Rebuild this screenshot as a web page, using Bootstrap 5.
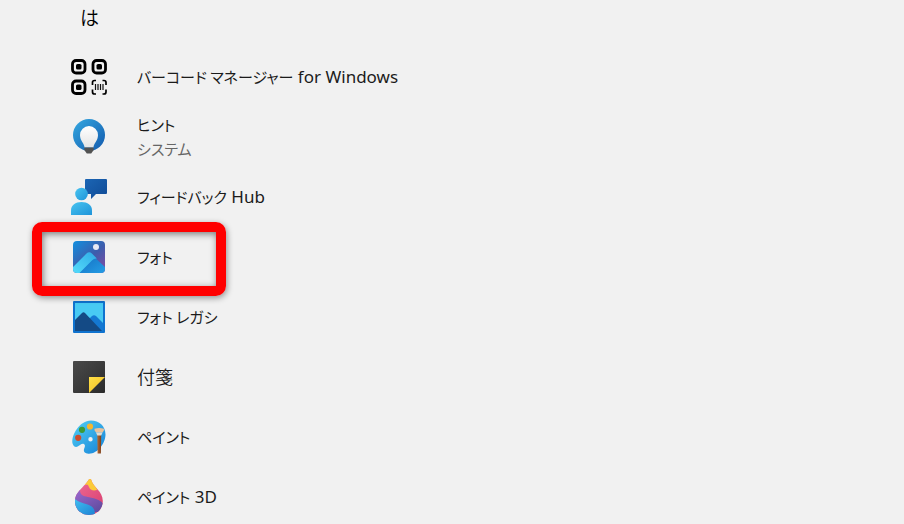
<!DOCTYPE html>
<html lang="ja">
<head>
<meta charset="utf-8">
<meta name="viewport" content="width=device-width, initial-scale=1">
<title>すべてのアプリ</title>
<link href="https://cdn.jsdelivr.net/npm/bootstrap@5.3.0/dist/css/bootstrap.min.css" rel="stylesheet">
<style>
body { background: #f1f1f1; color: #1b1b1b; font-family: "Noto Sans", "Noto Sans CJK JP", sans-serif; font-size: 17px; line-height: 24px; font-feature-settings: "palt"; }
.section-label { height: 47px; padding: 7px 0 0 80px; font-size: 19px; font-weight: 350; color: #000; }
.app-row { min-height: 60px; padding: 0 24px 0 71px; gap: 30px; color: inherit; }
.app-row:hover { color: inherit; }
.app-icon { width: 36px; height: 36px; flex: none; }
.kana { font-family: "Noto Sans CJK JP", sans-serif; font-size: 15px; font-weight: 400; }
.kanji { font-size: 18px; font-weight: 350; }
.app-sub { color: #666; }
.marker { left: 32px; top: -5px; width: 194px; height: 74px; border: 10px solid #f00; border-radius: 10px; box-shadow: 1px 2px 6px rgba(0,0,0,.4), inset 1px 2px 7px rgba(0,0,0,.5); pointer-events: none; }
</style>
</head>
<body>
<main class="vh-100 overflow-hidden">
<h1 class="section-label m-0 lh-sm">は</h1>
<ul class="list-unstyled m-0">
<li><a href="#" class="app-row d-flex align-items-center text-decoration-none">
<svg class="app-icon" viewBox="0 0 36 36" aria-hidden="true"><g fill="none" stroke="#000" stroke-width="2.8"><rect x="1.5" y="1.5" width="12.5" height="12.5" rx="3.6"/><rect x="22" y="1.5" width="12.5" height="12.5" rx="3.6"/><rect x="1.5" y="22" width="12.5" height="12.5" rx="3.6"/></g><g><rect x="5" y="5" width="5.5" height="5.5" rx="1.6"/><rect x="25.5" y="5" width="5.5" height="5.5" rx="1.6"/><rect x="5" y="25.5" width="5.5" height="5.5" rx="1.6"/></g><path d="M25 21.5h-1.5q-2 0-2 2V26M31.5 21.5H33q2 0 2 2V26M21.5 30.500V33q0 2 2 2H25M35 30.500V33q0 2-2 2h-1.500" fill="none" stroke="#000" stroke-width="1.7"/><path d="M24.500 25v6M27 25v6M29.500 25v6M32 25v6" stroke="#111" stroke-width="1.2"/></svg>
<span><span class="kana">バーコード マネージャー</span> for Windows</span></a></li>
<li><a href="#" class="app-row d-flex align-items-center text-decoration-none">
<svg class="app-icon" viewBox="0 0 36 36" aria-hidden="true"><defs><linearGradient id="tipBlue" x1="0" y1="0" x2="1" y2="1"><stop stop-color="#35a9e1"/><stop offset="1" stop-color="#1259ad"/></linearGradient><linearGradient id="bulb" x2="0" y2="1"><stop stop-color="#fff"/><stop offset="1" stop-color="#e4e4e4"/></linearGradient></defs><circle cx="18" cy="16" r="16" fill="url(#tipBlue)"/><path d="M13.500 28.500c0-4-4.500-6.500-4.500-12.500a9 9 0 0 1 18 0c0 6-4.500 8.500-4.500 12.500z" fill="url(#bulb)"/><path d="M13.300 28.500h9.400v2.500l-2.500 3.500h-4.400l-2.500-3.500z" fill="#525252"/></svg>
<span class="d-flex flex-column"><span class="kana">ヒント</span><span class="kana app-sub">システム</span></span></a></li>
<li><a href="#" class="app-row d-flex align-items-center text-decoration-none">
<svg class="app-icon" viewBox="0 0 36 36" aria-hidden="true"><defs><linearGradient id="person" x2="1" y2="1"><stop stop-color="#48c4f0"/><stop offset="1" stop-color="#1f94d9"/></linearGradient><linearGradient id="speech" x2="1" y2="1"><stop stop-color="#1b65b4"/><stop offset="1" stop-color="#104b96"/></linearGradient></defs><path d="M15 0h20q1 0 1 1v13q0 1-1 1H25l-5 5v-5h-5q-1 0-1-1V1q0-1 1-1z" fill="url(#speech)"/><circle cx="10.500" cy="15" r="6.300" fill="url(#person)"/><path d="M0 36v-4.500C0 26 4.500 23 10.500 23S21 26 21 31.500V36z" fill="url(#person)"/></svg>
<span><span class="kana">フィードバック</span> Hub</span></a></li>
<li class="position-relative"><a href="#" class="app-row d-flex align-items-center text-decoration-none">
<svg class="app-icon" viewBox="0 0 36 36" aria-hidden="true"><defs><linearGradient id="sky" x1=".1" y1="0" x2="1" y2="1"><stop stop-color="#168bdb"/><stop offset=".5" stop-color="#3d5dac"/><stop offset="1" stop-color="#884aa3"/></linearGradient><linearGradient id="ridge" x1="1" y1="0" x2="0" y2="1"><stop stop-color="#2eaae6"/><stop offset="1" stop-color="#55dcfb"/></linearGradient><linearGradient id="slope" x2="1" y2="1"><stop stop-color="#1269bd"/><stop offset="1" stop-color="#259de5"/></linearGradient><clipPath id="tile"><rect x="2" y="2" width="32" height="32" rx="4"/></clipPath></defs><g clip-path="url(#tile)"><path d="M2 2h32v32H2z" fill="url(#sky)"/><path d="M17 16q2-2 4 0l13 12v6H5z" fill="url(#slope)"/><path d="M2 28l13.500-13.500q2.700-2.400 5.400 0l5 5q-2.800-.3-5 2L8.500 34H2z" fill="url(#ridge)"/></g><circle cx="25" cy="8" r="3" fill="#e7e9f4"/></svg>
<span class="kana">フォト</span></a>
<div class="marker position-absolute" aria-hidden="true"></div></li>
<li><a href="#" class="app-row d-flex align-items-center text-decoration-none">
<svg class="app-icon" viewBox="0 0 36 36" aria-hidden="true"><rect x="2" y="2" width="32" height="32" rx="1" fill="#0f73cf"/><path d="M4 4h28v28H4z" fill="#48caf3"/><path d="M17 21l4-4q2-1.500 4 0l7 7v8H20z" fill="#1478d2"/><path d="M4 21l7-7q1.500-1.300 3 0l17 18H4z" fill="#144a85"/></svg>
<span class="kana">フォト レガシ</span></a></li>
<li><a href="#" class="app-row d-flex align-items-center text-decoration-none">
<svg class="app-icon" viewBox="0 0 36 36" aria-hidden="true"><defs><linearGradient id="note" x2="1" y2="1"><stop stop-color="#4a4a4a"/><stop offset="1" stop-color="#2b2b2b"/></linearGradient><linearGradient id="fold" x2="1" y2="1"><stop stop-color="#ffe048"/><stop offset="1" stop-color="#f3bd20"/></linearGradient></defs><rect x="2" y="2" width="32" height="32" rx="1" fill="url(#note)"/><path d="M18 18h16L18 34z" fill="url(#fold)"/></svg>
<span class="kanji">付箋</span></a></li>
<li><a href="#" class="app-row d-flex align-items-center text-decoration-none">
<svg class="app-icon" viewBox="0 -1 36 36" aria-hidden="true"><defs><linearGradient id="palette" x2="1" y2="1"><stop stop-color="#54d1f4"/><stop offset="1" stop-color="#1481d8"/></linearGradient><linearGradient id="handle" x2="1" y2="0"><stop stop-color="#b56a35"/><stop offset="1" stop-color="#7d3f19"/></linearGradient></defs><path fill-rule="evenodd" d="M20 .500C28 .500 34.500 6 34.500 14.500S27 33.500 18 33.800c-4 .2-6-2.300-4.800-5.200 1-2.300 1.100-3.600-.3-4.600-1.500-1-3.100.3-4.700 1.600C5.600 27.700 2.900 27.300 1.700 24 .5 20.500 2 14 6 8.700 9.700 4 14 .8 20 .5zM19.500 17a2.200 2.200 0 1 0 0 4.400 2.200 2.200 0 0 0 0-4.400z" fill="url(#palette)"/><circle cx="19" cy="6.500" r="3.100" fill="#f5b72e"/><circle cx="11" cy="9.800" r="3.100" fill="#3d9b36"/><circle cx="7.200" cy="17.800" r="3.100" fill="#cf4c2c"/><path d="M26.300 15h3.900l-.3 18.500h-3.300z" fill="url(#handle)"/><path d="M23.500 8.700q4.500-1.200 9.500 0 .5 1.800-1.500 3.800H25q-2-2-1.500-3.800z" fill="#e9c29c"/><path d="M25 12.500h6.500l-1.300 3h-3.900z" fill="#dfdbd3"/></svg>
<span class="kana">ペイント</span></a></li>
<li><a href="#" class="app-row d-flex align-items-center text-decoration-none">
<svg class="app-icon" viewBox="0 0 36 36" aria-hidden="true"><defs><linearGradient id="aqua" x2="1" y2="1"><stop stop-color="#45c9f4"/><stop offset="1" stop-color="#1e82d4"/></linearGradient><linearGradient id="violet" x2="1" y2="1"><stop stop-color="#a069d2"/><stop offset="1" stop-color="#59499a"/></linearGradient><linearGradient id="rose" x2="1" y2="1"><stop stop-color="#f0709a"/><stop offset="1" stop-color="#d63969"/></linearGradient><clipPath id="drop"><path d="M18.500 0q1.500-.5 2 1.500C22 8 31.800 12 31.800 22c0 8-6 14-13.900 14S4 30 4 22C4 13 12 9.500 17.500 1q.5-.9 1-1z"/></clipPath></defs><g clip-path="url(#drop)"><path d="M0-1h36v37H0z" fill="url(#rose)"/><path d="M14-1h9l3 12c-4 1-7 0-8-3s-2-3-4-2z" fill="#fbca39"/><path d="M9 11c0 5 3 6 8 7 7 1.500 13 2.500 16 8v7H0V14z" fill="url(#violet)"/><path d="M2 18c4 5 9 6 13 7 6 1.500 9 4 9 11H0z" fill="url(#aqua)"/></g></svg>
<span><span class="kana">ペイント</span> 3D</span></a></li>
</ul>
</main>
<script src="https://cdn.jsdelivr.net/npm/bootstrap@5.3.0/dist/js/bootstrap.bundle.min.js"></script>
</body>
</html>
